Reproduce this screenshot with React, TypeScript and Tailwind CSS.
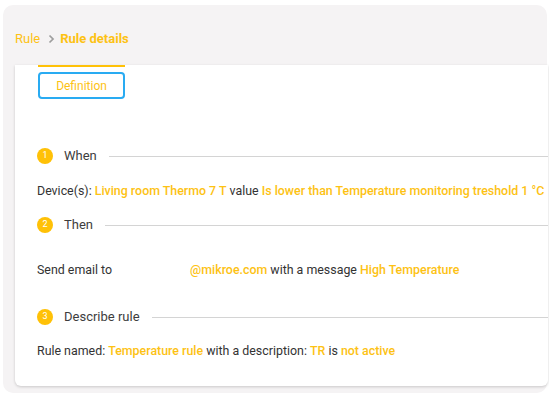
import React from 'react'

const Y = 'text-[#fdc214] font-medium'

function StepHeader({ n, title }: { n: number; title: string }) {
  return (
    <div className="flex items-center h-[20px]">
      <span className="w-[16px] h-[16px] rounded-full bg-[#ffc107] text-white text-[9px] flex items-center justify-center shrink-0">
        {n}
      </span>
      <span className="ml-[11px] text-[13px] text-[#3d3d3d] whitespace-nowrap">{title}</span>
      <div className="ml-[12px] flex-1 h-px bg-[#d4d4d4]" />
    </div>
  )
}

export default function App() {
  return (
    <div className="w-[549px] h-[400px] bg-white pt-[5px] pl-[3px] overflow-hidden" style={{ fontFamily: 'Roboto, "Liberation Sans", sans-serif' }}>
      <div className="w-[544px] h-[388px] bg-[#f5f3f4] rounded-[10px] pt-[24px] pl-[12px]">
        <div className="flex items-center h-[20px] text-[13px]">
          <span className="text-[#fdc214]">Rule</span>
          <svg width="12" height="12" viewBox="0 0 24 24" className="ml-[5px] mr-[3px]">
            <path d="M9 5l7 7-7 7" fill="none" stroke="#9e9e9e" strokeWidth="3.5" />
          </svg>
          <span className="text-[#fdc214] font-bold">Rule details</span>
        </div>

        <div className="mt-[16px] w-[533px] h-[321px] bg-white rounded-b-[6px] shadow-[0_1px_3px_rgba(0,0,0,0.18)] pl-[22px] pt-0">
          <div className="ml-[1px] w-[87px] h-[2px] bg-[#ffc107]" />
          <button className="mt-[5px] ml-[1px] w-[87px] h-[27px] border-2 border-[#29abf2] rounded-[4px] text-[12px] text-[#fdc214] flex items-center justify-center">
            Definition
          </button>

          <div className="mt-[47px]">
            <StepHeader n={1} title="When" />
          </div>
          <div className="mt-[15px] h-[20px] flex items-center text-[12.4px] text-[#333333] whitespace-nowrap">
            Device(s):&nbsp;<span className={Y}>Living room Thermo 7 T</span>&nbsp;value&nbsp;
            <span className={Y}>Is lower than Temperature monitoring treshold 1 °C</span>
          </div>

          <div className="mt-[14px]">
            <StepHeader n={2} title="Then" />
          </div>
          <div className="mt-[25px] h-[20px] flex items-center text-[12.4px] text-[#333333] whitespace-nowrap">
            Send email to
            <span className={`${Y} ml-[78px]`}>@mikroe.com</span>&nbsp;with a message&nbsp;
            <span className={Y}>High Temperature</span>
          </div>

          <div className="mt-[27px]">
            <StepHeader n={3} title="Describe rule" />
          </div>
          <div className="mt-[14px] h-[20px] flex items-center text-[12.4px] text-[#333333] whitespace-nowrap">
            Rule named:&nbsp;<span className={Y}>Temperature rule</span>&nbsp;with a description:&nbsp;
            <span className={Y}>TR</span>&nbsp;is&nbsp;<span className={Y}>not active</span>
          </div>
        </div>
      </div>
    </div>
  )
}
